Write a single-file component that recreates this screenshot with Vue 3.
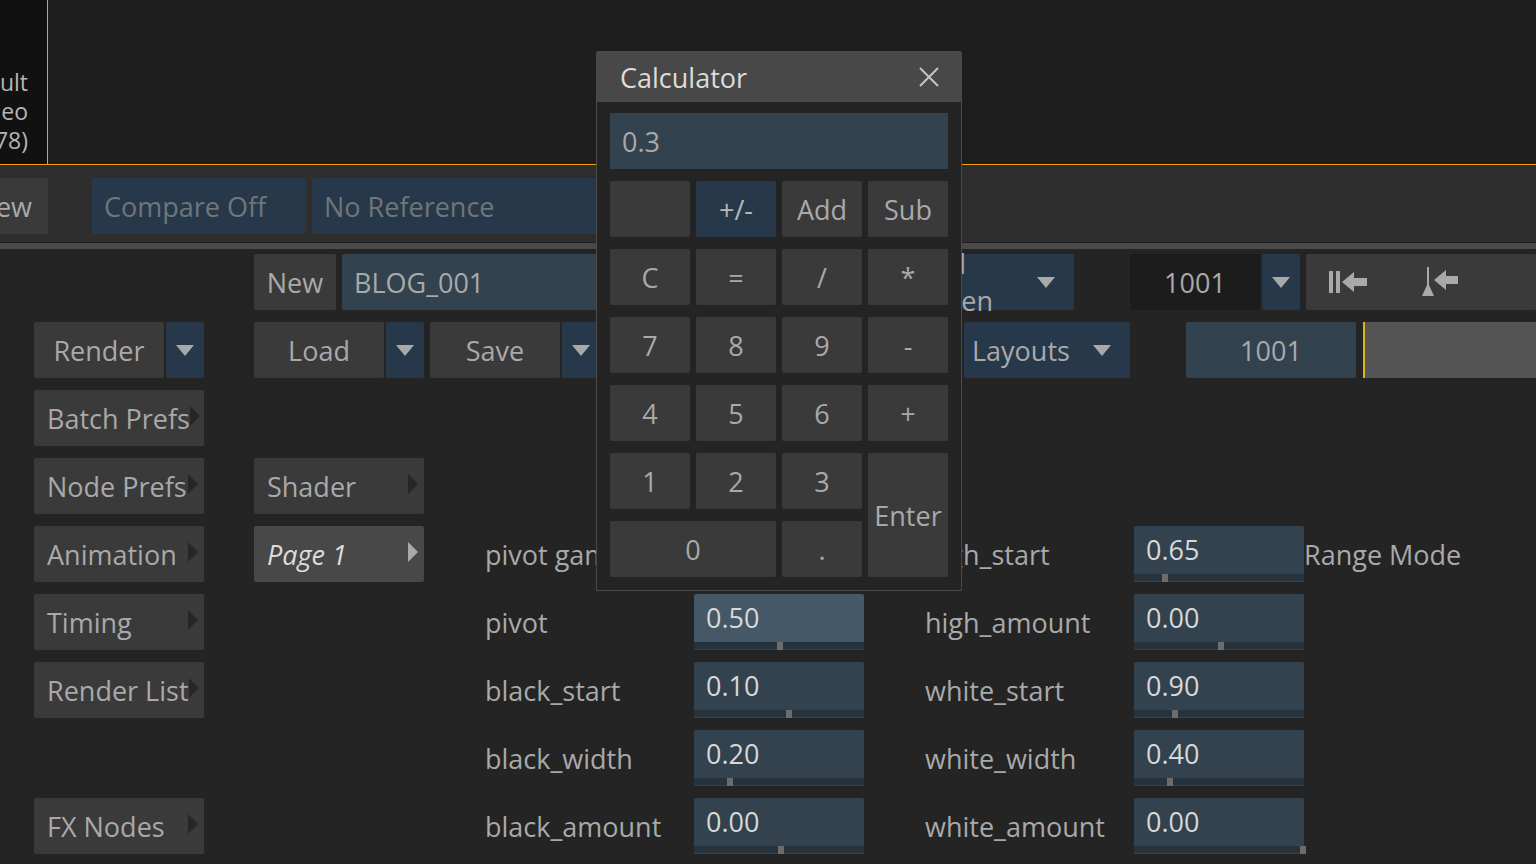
<script setup>
const navItems = [
  { label: 'Batch Prefs', row: 3 },
  { label: 'Node Prefs', row: 4 },
  { label: 'Animation', row: 5 },
  { label: 'Timing', row: 6 },
  { label: 'Render List', row: 7 },
  { label: 'FX Nodes', row: 9 }
]

const leftParams = [
  { label: 'pivot gamma', value: '1.00', handle: 86, row: 5 },
  { label: 'pivot', value: '0.50', handle: 86, row: 6, hover: true },
  { label: 'black_start', value: '0.10', handle: 95, row: 7 },
  { label: 'black_width', value: '0.20', handle: 36, row: 8 },
  { label: 'black_amount', value: '0.00', handle: 87, row: 9 }
]

const rightParams = [
  { label: 'high_start', value: '0.65', handle: 31, row: 5 },
  { label: 'high_amount', value: '0.00', handle: 87, row: 6 },
  { label: 'white_start', value: '0.90', handle: 41, row: 7 },
  { label: 'white_width', value: '0.40', handle: 36, row: 8 },
  { label: 'white_amount', value: '0.00', handle: 169, row: 9 }
]

const calcKeys = [
  { label: '', cls: '' },
  { label: '+/-', cls: 'blue' },
  { label: 'Add', cls: '' },
  { label: 'Sub', cls: '' },
  { label: 'C', cls: '' },
  { label: '=', cls: '' },
  { label: '/', cls: '' },
  { label: '*', cls: '' },
  { label: '7', cls: '' },
  { label: '8', cls: '' },
  { label: '9', cls: '' },
  { label: '-', cls: '' },
  { label: '4', cls: '' },
  { label: '5', cls: '' },
  { label: '6', cls: '' },
  { label: '+', cls: '' },
  { label: '1', cls: '' },
  { label: '2', cls: '' },
  { label: '3', cls: '' },
  { label: 'Enter', cls: 'enter' },
  { label: '0', cls: 'zero' },
  { label: '.', cls: '' }
]
</script>

<template>
  <div class="app">
    <div class="viewer">
      <div class="thumb">
        <div class="thumb-text">
          <span>Default</span>
          <span>Video</span>
          <span>(1.78)</span>
        </div>
      </div>
      <div class="viewport"></div>
    </div>

    <div class="toolbar">
      <button class="btn view-btn">View</button>
      <div class="dim compare">Compare Off</div>
      <div class="dim reference">No Reference</div>
    </div>
    <div class="divider"></div>

    <div class="panel">
      <div class="top-row row-one">
        <button class="btn new-btn">New</button>
        <div class="name-field">BLOG_001</div>
        <div class="blue token">
          <span>Add Token</span>
          <svg class="caret" viewBox="0 0 18 12"><path d="M0 1h18L9 12z" /></svg>
        </div>
        <div class="frame-dark">1001</div>
        <div class="blue arrow-cell">
          <svg class="caret" viewBox="0 0 18 12"><path d="M0 1h18L9 12z" /></svg>
        </div>
        <div class="btn transport">
          <svg class="step" width="40" height="28" viewBox="0 0 40 28">
            <path d="M1 3h4v22H1zM8 3h4v22H8zM14 14l12-10v6h13v8H26v6z" />
          </svg>
          <svg class="step" width="40" height="30" viewBox="0 0 40 30">
            <path d="M7 0h2v18l5 11H2l5-11zM14 13l12-10v6h12v8H26v6z" />
          </svg>
        </div>
      </div>

      <div class="top-row row-two">
        <div class="split load">
          <button class="btn">Load</button>
          <div class="blue arrow-cell">
            <svg class="caret" viewBox="0 0 18 12"><path d="M0 1h18L9 12z" /></svg>
          </div>
        </div>
        <div class="split save">
          <button class="btn">Save</button>
          <div class="blue arrow-cell">
            <svg class="caret" viewBox="0 0 18 12"><path d="M0 1h18L9 12z" /></svg>
          </div>
        </div>
        <div class="blue layouts">
          <span>Layouts</span>
          <svg class="caret" viewBox="0 0 18 12"><path d="M0 1h18L9 12z" /></svg>
        </div>
        <div class="frame-field">1001</div>
        <div class="track"></div>
      </div>

      <div class="split render">
        <button class="btn">Render</button>
        <div class="blue arrow-cell">
          <svg class="caret" viewBox="0 0 18 12"><path d="M0 1h18L9 12z" /></svg>
        </div>
      </div>

      <button
        v-for="item in navItems"
        :key="item.label"
        class="btn nav-btn"
        :style="{ gridRow: item.row }"
      >
        <span>{{ item.label }}</span>
        <svg class="tri" viewBox="0 0 12 24"><path d="M0 0l12 12L0 24z" /></svg>
      </button>

      <button class="btn nav-btn shader">
        <span>Shader</span>
        <svg class="tri" viewBox="0 0 12 24"><path d="M0 0l12 12L0 24z" /></svg>
      </button>
      <button class="btn nav-btn page">
        <span>Page 1</span>
        <svg class="tri" viewBox="0 0 12 24"><path d="M0 0l12 12L0 24z" /></svg>
      </button>

      <template v-for="p in leftParams" :key="p.label">
        <div class="param-label col-a" :style="{ gridRow: p.row }">{{ p.label }}</div>
        <div class="param-field col-b" :class="{ hover: p.hover }" :style="{ gridRow: p.row }">
          <span>{{ p.value }}</span>
          <div class="slider"><i :style="{ left: p.handle - 3 + 'px' }"></i></div>
        </div>
      </template>

      <template v-for="p in rightParams" :key="p.label">
        <div class="param-label col-c" :style="{ gridRow: p.row }">{{ p.label }}</div>
        <div class="param-field col-d" :style="{ gridRow: p.row }">
          <span>{{ p.value }}</span>
          <div class="slider"><i :style="{ left: p.handle - 3 + 'px' }"></i></div>
        </div>
      </template>

      <div class="param-label range">Range Mode</div>
    </div>

    <div class="calculator">
      <div class="calc-title">
        <span>Calculator</span>
        <svg width="20" height="20" viewBox="0 0 20 20">
          <path d="M1 1l18 18M19 1L1 19" />
        </svg>
      </div>
      <div class="calc-body">
        <div class="calc-display">0.3</div>
        <div class="calc-keys">
          <button v-for="(k, i) in calcKeys" :key="i" class="btn" :class="k.cls">{{ k.label }}</button>
        </div>
      </div>
    </div>
  </div>
</template>

<style scoped>
.app {
  position: relative;
  width: 1536px;
  height: 864px;
  overflow: hidden;
  background: #242424;
  color: #a9a9a9;
  font-family: "Open Sans", "Noto Sans", sans-serif;
  font-size: 27px;
  font-stretch: 90%;
}
button {
  font: inherit;
  font-stretch: inherit;
  color: inherit;
  border: none;
  padding: 0;
}

/* viewer */
.viewer {
  height: 165px;
  display: flex;
  background: #1e1e1e;
  border-bottom: 1px solid #f0a000;
  box-sizing: border-box;
}
.thumb {
  width: 47px;
  background: #111;
  overflow: hidden;
  display: flex;
  justify-content: flex-end;
  padding-top: 68px;
  box-sizing: content-box;
  height: 96px;
  border-right: 1px solid #f0a000;
}
.thumb-text {
  display: flex;
  flex-direction: column;
  align-items: flex-end;
  padding-right: 19px;
  font-size: 23px;
  line-height: 29px;
  color: #b5b5b5;
  white-space: nowrap;
  flex-shrink: 0;
}
.viewport { flex: 1; }

/* toolbar */
.toolbar {
  height: 78px;
  background: #2e2e2e;
  display: flex;
  align-items: flex-start;
  padding-top: 13px;
  box-sizing: border-box;
  border-bottom: 1px solid #1e1e1e;
  margin-left: 0;
  gap: 6px;
}
.btn {
  background: #3a3a3a;
  border-radius: 2px;
}
.view-btn {
  width: 48px;
  height: 56px;
  margin-right: 38px;
  overflow: hidden;
  display: flex;
  justify-content: flex-end;
  align-items: center;
  padding-right: 16px;
  box-sizing: border-box;
  flex-shrink: 0;
}
.dim {
  height: 56px;
  background: #27384a;
  border-radius: 2px;
  color: #6f767b;
  display: flex;
  align-items: center;
  padding-left: 12px;
  box-sizing: border-box;
}
.compare { width: 214px; }
.reference { width: 300px; }
.divider {
  height: 6px;
  background: #4a4a4a;
}

/* main panel */
.panel {
  display: grid;
  grid-template-columns: 170px 50px 170px 61px 209px 170px 61px 209px 170px 1fr;
  grid-template-rows: repeat(9, 56px);
  row-gap: 12px;
  padding: 5px 0 0 34px;
}
.top-row {
  grid-column: 3 / -1;
  display: flex;
  gap: 6px;
  width: 1282px;
}
.row-one { grid-row: 1; }
.row-two { grid-row: 2; }
.new-btn { width: 82px; flex-shrink: 0; }
.name-field {
  width: 560px;
  flex-shrink: 0;
  background: #32434f;
  border-radius: 2px;
  padding-left: 12px;
  box-sizing: border-box;
  display: flex;
  align-items: center;
}
.blue {
  background: #27384a;
  border-radius: 2px;
}
.token, .layouts {
  display: flex;
  align-items: center;
  justify-content: space-between;
  padding: 0 19px 0 8px;
  box-sizing: border-box;
  flex-shrink: 0;
}
.token { width: 166px; margin-right: 50px; margin-left: 0; }
.layouts { width: 166px; margin-left: 356px; margin-right: 50px; }
.frame-dark {
  width: 130px;
  flex-shrink: 0;
  margin-right: -4px;
  background: #1c1c1c;
  border-radius: 2px;
  display: flex;
  align-items: center;
  justify-content: center;
}
.arrow-cell {
  width: 38px;
  flex-shrink: 0;
  display: flex;
  align-items: center;
  justify-content: center;
}
.caret {
  width: 18px;
  height: 12px;
  fill: #a9a9a9;
  flex-shrink: 0;
}
.transport {
  flex: 1;
  display: flex;
  align-items: center;
  gap: 52px;
  padding-left: 22px;
}
.step {
  fill: #a9a9a9;
  flex-shrink: 0;
}
.split {
  display: flex;
  gap: 2px;
  width: 170px;
  flex-shrink: 0;
}
.split .btn { width: 130px; flex-shrink: 0; }
.save { width: 172px; }
.render { grid-column: 1; grid-row: 2; }
.frame-field {
  width: 170px;
  flex-shrink: 0;
  background: #32434f;
  border-radius: 2px;
  display: flex;
  align-items: center;
  justify-content: center;
}
.track {
  flex: 1;
  background: #555;
  border-left: 2px solid #d9b51c;
  margin-left: 1px;
}
.nav-btn {
  grid-column: 1;
  display: flex;
  align-items: center;
  justify-content: space-between;
  padding: 0 6px 0 13px;
  box-sizing: border-box;
  white-space: nowrap;
}
.tri {
  width: 10px;
  height: 20px;
  fill: #262626;
  flex-shrink: 0;
  margin-top: -4px;
}
.shader { grid-column: 3; grid-row: 4; }
.page {
  grid-column: 3;
  grid-row: 5;
  background: #484848;
  color: #dcdcdc;
  font-style: italic;
}
.page .tri { fill: #a9a9a9; }
.param-label {
  display: flex;
  align-items: center;
  white-space: nowrap;
}
.col-a { grid-column: 5; }
.col-b { grid-column: 6; }
.col-c { grid-column: 8; margin-left: 0; }
.col-d { grid-column: 9; }
.range { grid-column: 10; grid-row: 5; }
.param-field {
  position: relative;
  background: #32434f;
  border-radius: 2px;
  color: #d8d8d8;
  padding: 6px 0 0 12px;
  box-sizing: border-box;
  line-height: 36px;
}
.param-field.hover { background: #445868; }
.slider {
  position: absolute;
  left: 0;
  right: 0;
  bottom: 0;
  height: 8px;
  background: #26333d;
  border-bottom: 1px solid #32434f;
  box-sizing: border-box;
}
.slider i {
  position: absolute;
  top: 0;
  width: 6px;
  height: 8px;
  background: #6c6c6c;
}

/* calculator popup */
.calculator {
  position: absolute;
  left: 596px;
  top: 51px;
  width: 366px;
  height: 540px;
  background: #242424;
  border: 1px solid #4a4a4a;
  border-radius: 2px 2px 0 0;
  box-sizing: border-box;
}
.calc-title {
  height: 50px;
  background: #484848;
  color: #dcdcdc;
  display: flex;
  align-items: center;
  justify-content: space-between;
  padding: 0 22px 0 23px;
}
.calc-title svg {
  stroke: #c4c4c4;
  stroke-width: 2;
  fill: none;
}
.calc-body {
  padding: 11px 13px 0;
}
.calc-display {
  height: 56px;
  background: #32434f;
  display: flex;
  align-items: center;
  padding-left: 12px;
  margin-bottom: 12px;
}
.calc-keys {
  display: grid;
  grid-template-columns: repeat(4, 80px);
  grid-auto-rows: 56px;
  gap: 12px 6px;
}
.calc-keys .zero { grid-column: span 2; }
.calc-keys .enter { grid-column: 4; grid-row: 5 / span 2; }
.calc-keys .blue { background: #27384a; color: #b8b8b8; }
</style>
